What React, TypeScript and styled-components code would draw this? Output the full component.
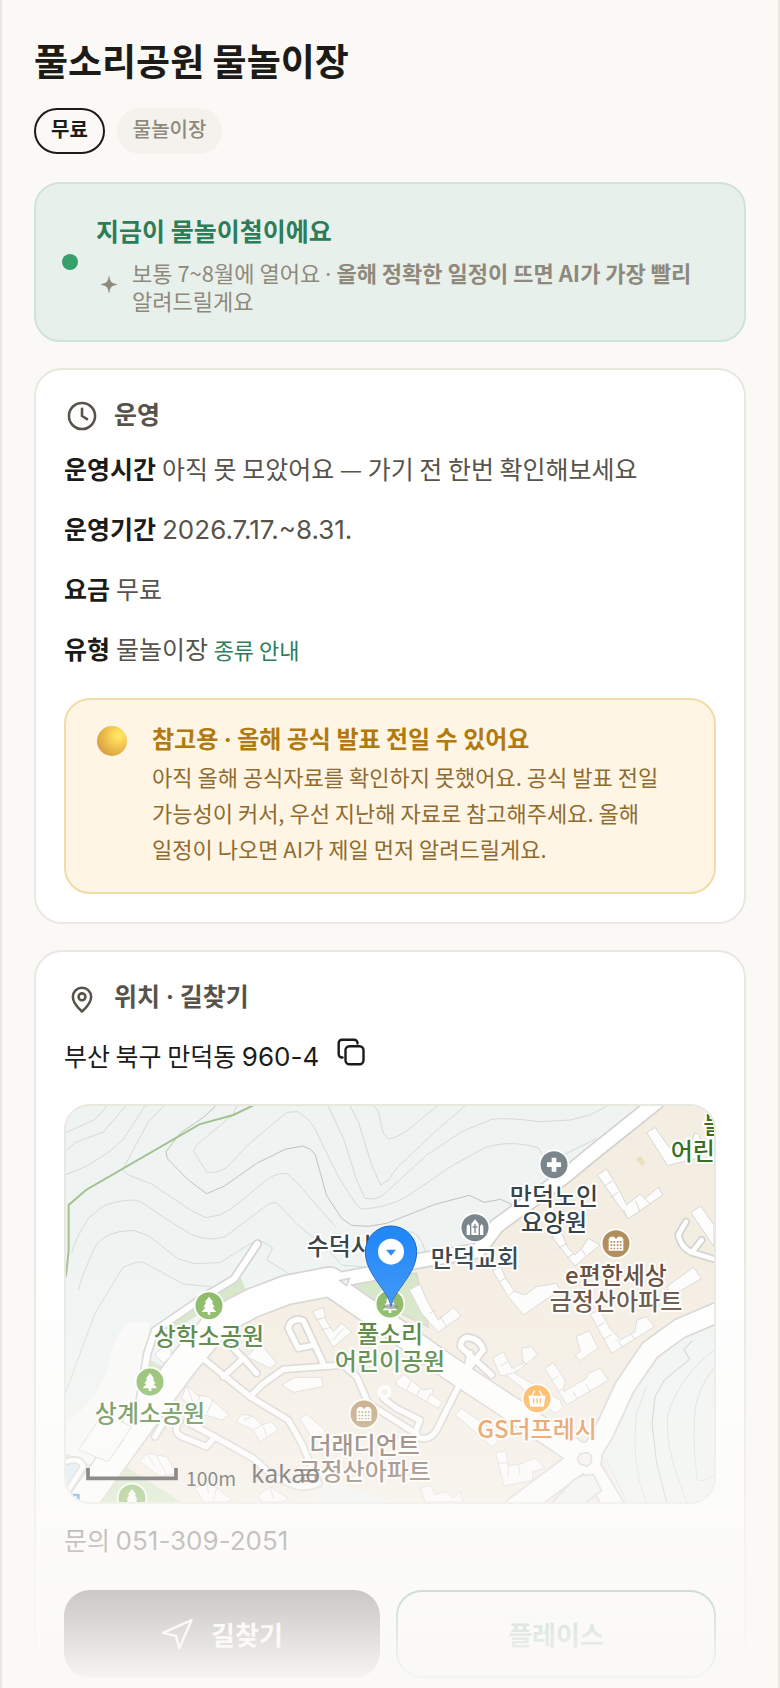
import React from "react";
import styled, { createGlobalStyle, css } from "styled-components";

const GlobalStyle = createGlobalStyle`
  *, *::before, *::after { box-sizing: border-box; }
  body {
    margin: 0;
    background: #faf9f6;
    color: #1c1b18;
    font-family: "Noto Sans CJK KR", Inter, sans-serif;
    font-size: 25px;
    line-height: 40px;
    word-break: keep-all;
  }
  h1, h2, p, dl, dd, dt { margin: 0; }
  button { font: inherit; color: inherit; cursor: pointer; }
`;

const Page = styled.main`
  position: relative;
  height: 100vh;
  overflow: hidden;
  padding: 34px 32px 0;
  border: solid #e9e7e1;
  border-width: 0 2px;
`;

const Title = styled.h1`
  font-size: 37px;
  line-height: 52px;
  font-weight: 700;
`;

const Tags = styled.div`
  display: flex;
  gap: 12px;
  margin-top: 22px;
`;

const Tag = styled.span<{ $outlined?: boolean }>`
  border-radius: 23px;
  font-size: 20px;
  line-height: 26px;
  ${(p) =>
    p.$outlined
      ? css`
          padding: 6px 15px 10px;
          border: 2px solid #1c1b18;
          font-weight: 700;
        `
      : css`
          padding: 8px 16px 12px;
          background: #f3f2ed;
          color: #8f897c;
          font-weight: 500;
        `}
`;

const Season = styled.section`
  display: flex;
  align-items: center;
  gap: 18px;
  margin-top: 28px;
  padding: 26px;
  border: 2px solid #cfe4d8;
  border-radius: 26px;
  background: #e8f0eb;
`;

const Dot = styled.span`
  flex: none;
  width: 16px;
  height: 16px;
  border-radius: 50%;
  background: #36a06b;
`;

const SeasonTitle = styled.h2`
  color: #2d7d58;
  font-size: 25px;
  line-height: 40px;
  font-weight: 700;
`;

const Hint = styled.div`
  display: flex;
  align-items: center;
  gap: 10px;
  margin-top: 8px;
  color: #8f897c;
  font-size: 22px;
  line-height: 28px;

  svg { flex: none; }
`;

const Card = styled.section`
  margin-top: 26px;
  padding: 28px;
  border: 2px solid #e9e7e1;
  border-radius: 28px;
  background: #fff;
`;

const CardHeader = styled.header`
  display: flex;
  align-items: center;
  gap: 14px;
  height: 36px;
  color: #57534a;
`;

const CardTitle = styled.h2`
  padding-bottom: 6px;
  font-size: 25px;
  line-height: 30px;
  font-weight: 700;
`;

const Facts = styled.dl`
  display: grid;
  gap: 20px;
  margin-top: 14px;
`;

const Fact = styled.div`
  display: flex;
  gap: 6px;

  dt { font-weight: 700; }
  dd { color: #57534a; }
`;

const Separator = styled.span`
  font-family: Inter, sans-serif;
  line-height: 1;
`;

const Digits = styled.span`
  font-family: Inter, sans-serif;
  font-size: 26px;
  line-height: 1;
`;

const GuideLink = styled.a`
  color: #2d7d58;
  font-size: 22px;
  line-height: 1;
  text-decoration: none;
`;

const Notice = styled.aside`
  display: flex;
  gap: 22px;
  margin-top: 30px;
  padding: 18px 28px 26px;
  border: 2px solid #f0dca6;
  border-radius: 26px;
  background: #fff5e5;
  color: #8f6b2e;
  font-size: 22px;
  line-height: 36px;
`;

const NoticeTitle = styled.h2`
  color: #b27a0c;
  font-size: 24px;
  line-height: 40px;
  font-weight: 700;
`;

const Orb = styled.span`
  flex: none;
  width: 30px;
  height: 30px;
  margin: 8px 3px;
  border-radius: 50%;
  background: radial-gradient(circle at 72% 32%, #ffe562 8%, #eebf4c 45%, #d8a145 75%, #cf7a60 100%);
`;

const Address = styled.div`
  display: flex;
  align-items: flex-start;
  gap: 12px;
  min-height: 48px;
  margin-top: 16px;
  line-height: 46px;
`;

const CopyButton = styled.button`
  display: grid;
  place-items: center;
  width: 40px;
  height: 40px;
  padding: 0;
  border: 0;
  background: none;
`;

const MapFrame = styled.figure`
  height: 400px;
  margin: 24px 0 0;
  border: 2px solid #e9e7e1;
  border-radius: 26px;
  overflow: hidden;

  svg { display: block; width: 100%; height: 100%; }
`;

const Contact = styled.p`
  margin-top: 15px;
  color: #57534a;
`;

const Actions = styled.div`
  display: flex;
  gap: 16px;
  margin-top: 31px;
`;

const Action = styled.button<{ $primary?: boolean }>`
  display: flex;
  flex: 1;
  align-items: center;
  justify-content: center;
  gap: 18px;
  height: 88px;
  padding: 0;
  border-radius: 26px;
  font-size: 26px;
  font-weight: 700;
  ${(p) =>
    p.$primary
      ? css`
          border: 0;
          background: #1c1b18;
          color: #fff;
        `
      : css`
          border: 2px solid #2d7d58;
          background: #fff;
          color: #2d7d58;
        `}
`;

const Fade = styled.div`
  position: absolute;
  right: -2px;
  bottom: 0;
  left: -2px;
  height: 448px;
  background: linear-gradient(rgba(250, 249, 246, 0), #faf9f6);
  pointer-events: none;
`;

const Sparkle = () => (
  <svg width="26" height="26" viewBox="0 0 26 26" aria-hidden="true">
    <path d="M13 3.500C14 9 15.500 10.500 21 11.500C15.500 12.500 14 14 13 19.500C12 14 10.500 12.500 5 11.500C10.500 10.500 12 9 13 3.500Z" fill="currentColor" stroke="currentColor" strokeWidth=".6" />
  </svg>
);

const iconProps = {
  fill: "none",
  stroke: "currentColor",
  strokeLinecap: "round",
  strokeLinejoin: "round",
  "aria-hidden": true,
} as const;

const ClockIcon = () => (
  <svg width="36" height="36" viewBox="0 0 24 24" strokeWidth="1.7" {...iconProps}>
    <circle cx="12" cy="12" r="8.700" />
    <path d="M12 7.200V12l3.400 2.100" />
  </svg>
);

const PlaceIcon = () => (
  <svg width="36" height="36" viewBox="0 0 24 24" strokeWidth="1.7" {...iconProps}>
    <path d="M12 21C15.800 17.700 18.100 14.500 18.100 11.200a6.100 6.100 0 0 0-12.200 0C5.900 14.500 8.200 17.700 12 21z" />
    <circle cx="12" cy="11.200" r="2.300" />
  </svg>
);

const CopyIcon = () => (
  <svg width="28" height="28" viewBox="0 0 28 28" strokeWidth="2.4" {...iconProps}>
    <rect x="8.500" y="8.200" width="18" height="18" rx="4" />
    <path d="M5.500 19.500H5a3.300 3.300 0 0 1-3.300-3.300V5A3.300 3.300 0 0 1 5 1.700h12A3.300 3.300 0 0 1 20.500 5v.5" />
  </svg>
);

const NavIcon = () => (
  <svg width="32" height="32" viewBox="0 0 32 32" strokeWidth="2.4" {...iconProps}>
    <path d="M2 14.800L30.500 2.200 18.200 30.200 15 18z" />
  </svg>
);

type Tone = { fill: string };
const slate: Tone = { fill: "#36434a" };
const leaf: Tone = { fill: "#37701f" };
const bark: Tone = { fill: "#5c4433" };
const amber: Tone = { fill: "#e2751a" };

const MapText = styled.text`
  font-family: "Noto Sans CJK KR", sans-serif;
  font-size: 72px;
  font-weight: 500;
  paint-order: stroke;
  stroke: #fff;
  stroke-width: 12px;
  stroke-linejoin: round;
`;

const Label = ({ x, y, tone, anchor = "middle", lines }: { x: number; y: number; tone: Tone; anchor?: "start" | "middle"; lines: string[] }) => (
  <MapText textAnchor={anchor} fill={tone.fill}>
    {lines.map((line, i) => (
      <tspan key={line} x={x} y={y + i * 79}>
        {line}
      </tspan>
    ))}
  </MapText>
);

const Badge = ({ x, y, color, children }: { x: number; y: number; color: string; children: React.ReactNode }) => (
  <g transform={`translate(${x} ${y})`}>
    <circle r="43" fill={color} stroke="#fff" strokeWidth="5" />
    <g fill="#fff">{children}</g>
  </g>
);

const Tree = () => <path d="M0-27L13-10H8L17 5H10L22 19H4V27H-4V19H-22L-10 5H-17L-8-10H-13Z" />;

const Apartment = ({ color }: { color: string }) => (
  <>
    <path d="M-22-14L-16-21H-6L0-14L6-21H16L22-14V21H-22Z" />
    <path d="M-14-8v24M-5-8v24M5-8v24M14-8v24" stroke={color} strokeWidth="5" strokeDasharray="5 5" />
  </>
);

const contours = [
  "M78 158L165 118L201 78",
  "M78 212L105 188L190 156L257 78",
  "M78 284L143 257L205 217L250 178L315 78",
  "M372 78L325 125L285 200L247 270L265 285L335 312L455 392L498 413L540 405L575 385L685 296Q712 278 742 281L780 318L888 442",
  "M95 520Q105 478 145 415L188 379Q265 350 302 365L375 415L455 464Q505 486 555 470L680 376Q695 366 710 368L768 430L865 510L905 555L980 562",
  "M115 630Q128 580 168 495Q200 452 280 451L325 467L415 537L465 551L540 548L620 498L655 478L698 503L680 540L750 583",
  "M78 935L165 700L248 563Q290 542 310 547L430 612L520 621",
  "M590 78L578 105L470 195L460 212L500 276Q535 282 565 258L620 198L740 97L772 95Q800 108 823 143L895 290L950 375L965 387Q1040 384 1100 350L1240 255L1335 203Q1395 183 1460 195L1495 203L1510 230",
  "M865 78L912 180L950 300L975 355Q1005 362 1030 345L1160 225L1265 155L1355 118Q1400 112 1500 125L1590 120L1650 105L1702 78",
  "M930 78L955 125L995 255L1022 315L1045 300L1072 262L1200 142L1275 78",
  "M1003 78L1015 95L1030 160L1045 177Q1085 170 1125 132L1192 78",
  "M1510 255L1670 175",
  "M1100 455Q1140 450 1158 520",
];

const majorContours = [
  "M527 78L490 112L420 160L378 215L382 236L445 300L500 341L553 318L650 250L735 208L788 198L812 208L826 225L860 347L905 415L935 436L985 439L1040 430L1185 373L1288 346L1332 367L1382 358L1430 380",
  "M1957 782L1932 808L1949 838L1873 900L1845 950L1836 1030L1850 1150L1880 1266",
];

const lowerContours = [
  "M2022 810Q1910 900 1882 1010Q1880 1100 1910 1180L1940 1266",
  "M2022 865Q1965 930 1963 1020Q1960 1120 1972 1200L1990 1202L2022 1185",
  "M1820 918L1790 1000Q1770 1140 1818 1266",
  "M1700 1140L1760 1266",
];

const roads: { d: string; w: number }[] = [
  { d: "M652 492L582 597L500 646L345 752L322 820L300 960L188 1145", w: 18 },
  { d: "M1850 66L1660 218L1580 284L1370 438L1315 512L1120 545L1000 580L860 606", w: 40 },
  { d: "M870 605L740 630L640 668L540 720L430 850L330 985L110 1290", w: 84 },
  { d: "M850 600L1050 738L1220 858L1420 990L1630 1132", w: 68 },
  { d: "M2050 690L1920 745L1830 810L1755 920L1690 1060L1640 1140L1730 1290", w: 56 },
  { d: "M1650 1120L1430 1285", w: 68 },
  { d: "M1625 1132L1640 1132", w: 88 },
  { d: "M470 820L630 950L745 1020L785 1090L835 1210Q790 1230 750 1210L700 1190L640 1135L560 1090L440 1025", w: 16 },
  { d: "M550 890L610 835L650 880M610 835L575 800", w: 16 },
  { d: "M630 950L665 915L730 868L910 855L950 890L985 970L1130 1062", w: 16 },
  { d: "M850 850L790 722Q770 712 750 730L745 745L775 805L822 795", w: 16 },
  { d: "M345 1070L375 1020L412 1035Q400 1060 430 1072L500 1100L525 1070", w: 16 },
  { d: "M1030 955L1070 985L1140 1020L1125 1060M1255 920L1190 1050Q1170 1085 1130 1072", w: 16 },
  { d: "M1290 860L1330 810Q1320 775 1280 772Q1260 780 1262 800L1355 885M1290 820L1280 870", w: 16 },
  { d: "M1938 425L1915 465Q1925 510 1965 520L2030 540M1955 518L1985 480", w: 14 },
  { d: "M78 1145Q120 1130 130 1160L78 1240", w: 14 },
];

const buildings = [
  "M1820 158L1845 142L1882 195L1910 225L1950 200L1965 158L1980 165L1970 235L1883 257Z",
  "M1672 285L1700 267L1740 335L1760 375L1778 360L1800 342L1814 356L1855 322L1868 345L1764 417L1735 375Z",
  "M1952 397L1982 378L2022 435V500Z",
  "M1535 470L1565 460L1585 505L1605 525L1625 505L1645 475L1680 495L1605 558Z",
  "M1358 573L1382 560L1400 600L1425 635L1455 645L1490 620L1550 610L1560 630L1450 705L1405 650Z",
  "M1108 630L1140 612L1160 660L1195 720L1240 682L1263 708L1195 757L1145 700Z",
  "M1650 702L1680 690L1710 745L1742 780L1785 755L1790 720L1820 710L1843 740L1715 820Z",
  "M1608 770L1648 752L1675 805L1620 842L1605 825L1622 815Z",
  "M1880 620L1960 562L1985 595L1900 645Z",
  "M1358 835L1390 815L1415 865L1450 850L1445 805L1475 800L1492 825L1410 890L1380 885Z",
  "M1398 885L1420 878L1560 960L1570 985L1545 1000Z",
  "M1515 865L1540 848L1575 900L1570 935L1640 895L1645 880L1680 865L1705 900L1580 975Z",
  "M1068 905L1090 882L1150 930L1180 925L1175 945L1207 965L1195 985L1070 915Z",
  "M1246 1005L1265 985L1385 1070L1358 1102Z",
  "M1367 1118L1397 1112L1405 1158L1450 1150L1455 1145L1485 1135L1515 1165L1478 1175V1200L1392 1218Z",
  "M1142 1225L1172 1215L1185 1245L1210 1235L1225 1240L1240 1255L1260 1235L1270 1266H1155Z",
  "M818 695L850 682L858 720L880 755L905 730L935 755L880 802Z",
  "M424 955L440 915L470 945L505 950L568 1005L545 1020L480 1000Z",
  "M588 1025L605 1003L640 1008L665 1035L695 1025L715 1050L660 1085L640 1050Z",
  "M725 915L765 892L845 892L850 920L760 937Z",
  "M300 1145L320 1120L380 1130L410 1180L360 1190Z",
  "M465 1225L500 1200L578 1260L560 1266H490Z",
  "M655 1245L690 1220L745 1255L730 1266H665Z",
  "M115 1110L190 1000L275 1040L205 1145Z",
  "M780 1015L800 1003L855 1050L850 1075L810 1065Z",
  "M620 830L660 790L710 850L690 865Z",
  "M345 825L365 800L395 810L392 830L370 850Z",
];

const buildingSeams =
  "M1692 318L1716 304M1712 352L1736 336M1764 417L1750 388M1800 395L1786 362M1832 372L1814 356M1555 505L1578 492M1580 535L1600 522M1640 530L1624 508M1378 605L1400 592M1408 645L1424 632M1168 700L1188 690M1218 738L1200 708M1672 740L1694 728M1692 778L1715 762M1745 800L1732 778M1785 778L1770 760M1380 858L1402 846M1432 876L1418 862M1460 855L1446 838M1535 900L1556 888M1555 935L1574 922M1612 958L1600 935M1650 935L1638 912M1100 930L1112 905M1130 948L1142 925M1160 965L1172 940M1370 1150L1400 1148M1405 1190L1404 1158M1440 1185L1436 1152M828 720L856 712M845 750L872 742M880 780L910 745M440 915L460 970M480 945L470 980M520 960L500 1000M610 1020L640 1008M640 1050L665 1035M680 1070L670 1040M320 1120L345 1160M350 1128L380 1185M500 1200L505 1240M530 1225L520 1260M690 1220L700 1255";

const NeighborhoodMap = () => (
  <svg viewBox="78 78 1944 1188" preserveAspectRatio="xMidYMid slice" role="img" aria-label="풀소리공원 주변 지도">
    <rect x="78" y="78" width="1944" height="1188" fill="#f4ede2" />
    <path d="M0 0H1930L1580 284L1370 438L1300 530L860 600L600 680L450 800L300 980L60 1330H0Z" fill="#eff4f2" />
    <path d="M275 728H330L300 1000L100 1300H60V1035Q165 980 205 860Q225 745 275 728Z" fill="#f9faf9" />
    <path d="M78 1120L165 1160L90 1266H60Z" fill="#d9e9f4" />
    <path d="M2040 730L1900 790L1800 905L1690 1130L1760 1290H2040Z" fill="#eff4f2" />
    <path d="M860 1200L1060 1266H820Z" fill="#eff4f2" />
    <path d="M520 640L602 592L620 635L480 700L390 760L370 735Z" fill="#d3e5c4" />
    <path d="M330 840L378 865L300 975Z" fill="#d3e5c4" />
    <path d="M950 590L1130 580L1165 740L1060 690L938 628Z" fill="#d3e5c4" stroke="#d4d4d0" strokeWidth="5" />
    <path d="M240 1150L430 1270H150Z" fill="#cde3bb" />

    <g fill="none" stroke="#d3dad6" strokeWidth="3">
      {contours.map((d) => <path key={d} d={d} />)}
      {lowerContours.map((d) => <path key={d} d={d} />)}
    </g>
    <g fill="none" stroke="#bcc4b8" strokeWidth="3">
      {majorContours.map((d) => <path key={d} d={d} />)}
    </g>
    <path d="M640 76L580 105L478 133L138 330L86 375V510L78 590" fill="none" stroke="#a3c18f" strokeWidth="6" />

    <g fill="none" stroke="#d3d2d1" strokeLinejoin="round" strokeLinecap="round">
      {roads.map((r) => <path key={r.d} d={r.d} strokeWidth={r.w + 10} />)}
    </g>
    <g fill="none" stroke="#fff" strokeLinejoin="round" strokeLinecap="round">
      {roads.map((r) => <path key={r.d} d={r.d} strokeWidth={r.w} />)}
    </g>
    <path d="M1600 1200L1628 1186L1660 1183L1685 1232L1625 1275H1530Z" fill="#eff4f2" stroke="#d3d2d1" strokeWidth="5" />
    <path d="M900 602L928 595L920 616Z" fill="#f4f4f2" stroke="#d3d2d1" strokeWidth="5" />
    <path d="M195 1140L255 1060L250 1080L205 1140Z" fill="#ecebe9" stroke="#d3d2d1" strokeWidth="4" />
    <path d="M1620 1122L1640 1117L1654 1126V1148L1642 1158L1620 1152L1612 1138Z" fill="#f4f2ee" stroke="#d3d2d1" strokeWidth="5" />
    <circle cx="1033" cy="936" r="15" fill="#f4ede2" stroke="#fff" strokeWidth="12" />

    <g fill="#fdfdfd" stroke="#d9d7d4" strokeWidth="3">
      {buildings.map((d) => <path key={d} d={d} />)}
      <path d={buildingSeams} fill="none" />
    </g>
    <path d="M1788 236L1802 227L1817 249L1805 258Z" fill="#eadfbf" />

    <Badge x={1542} y={254} color="#7b868c">
      <path d="M-7-21H7V-7H21V7H7V21H-7V7H-21V-7H-7Z" />
    </Badge>
    <Badge x={1305} y={443} color="#7b868c">
      <path d="M-25 22V-4L-20-11L-15-4V22ZM15 22V-4L20-11L25-4V22ZM-11 22V-12L0-25L11-12V22Z" />
      <path d="M0-12V16M-7-2H7" stroke="#7b868c" strokeWidth="4" />
    </Badge>
    <Badge x={1728} y={491} color="#b28d5c"><Apartment color="#b28d5c" /></Badge>
    <Badge x={507} y={677} color="#80b458"><Tree /></Badge>
    <Badge x={1050} y={672} color="#80b458"><Tree /></Badge>
    <Badge x={330} y={906} color="#78b04e"><Tree /></Badge>
    <Badge x={276} y={1254} color="#78b04e"><Tree /></Badge>
    <Badge x={972} y={1002} color="#b28d5c"><Apartment color="#b28d5c" /></Badge>
    <Badge x={1491} y={956} color="#ffa52e">
      <path d="M-26-9H26L20 24H-20Z" />
      <path d="M-16-8L-7-24M16-8L7-24" stroke="#fff" strokeWidth="4" />
      <path d="M-10-1V14M0-1V14M10-1V14" stroke="#ffa52e" strokeWidth="4" />
    </Badge>

    <Label x={800} y={525} tone={slate} anchor="start" lines={["수덕사"]} />
    <Label x={1542} y={374} tone={slate} lines={["만덕노인", "요양원"]} />
    <Label x={1305} y={562} tone={slate} lines={["만덕교회"]} />
    <Label x={1728} y={612} tone={bark} lines={["e편한세상", "금정산아파트"]} />
    <Label x={1990} y={161} tone={leaf} anchor="start" lines={["늘"]} />
    <Label x={1892} y={239} tone={leaf} anchor="start" lines={["어린"]} />
    <Label x={507} y={796} tone={leaf} lines={["상학소공원"]} />
    <Label x={330} y={1025} tone={leaf} lines={["상계소공원"]} />
    <Label x={1050} y={790} tone={leaf} lines={["풀소리", "어린이공원"]} />
    <Label x={974} y={1121} tone={bark} lines={["더래디언트", "금정산아파트"]} />
    <Label x={1491} y={1074} tone={amber} lines={["GS더프레시"]} />

    <ellipse cx="1053" cy="680" rx="22" ry="8" fill="#6f7a70" opacity=".6" />
    <path d="M1053 680C1045 630 976 585 976 515A77 77 0 0 1 1130 515C1130 585 1061 630 1053 680Z" fill="#2489f8" stroke="#1b63c4" strokeWidth="3" />
    <circle cx="1053" cy="515" r="39" fill="#fff" />
    <path d="M1038 509H1068L1053 527Z" fill="#2489f8" />

    <path d="M96 1245H115V1266" fill="none" stroke="#3d8fd0" strokeWidth="8" />
    <path d="M144 1164V1195H408V1164" fill="none" stroke="#111" strokeWidth="11" />
    <text x="438" y="1218" fill="#111" fontFamily="'Noto Sans CJK KR', sans-serif" fontSize="58" fontWeight="400">100m</text>
    <text x="634" y="1210" fill="#111" fontFamily="'Noto Sans', sans-serif" fontSize="74" fontWeight="400">kakao</text>
  </svg>
);

export default function App() {
  return (
    <>
      <GlobalStyle />
      <Page>
        <Title>풀소리공원 물놀이장</Title>
        <Tags>
          <Tag $outlined>무료</Tag>
          <Tag>물놀이장</Tag>
        </Tags>

        <Season>
          <Dot />
          <div>
            <SeasonTitle>지금이 물놀이철이에요</SeasonTitle>
            <Hint>
              <Sparkle />
              <p>
                보통 7~8월에 열어요 <Separator>·</Separator>{" "}
                <strong>올해 정확한 일정이 뜨면 AI가 가장 빨리</strong> 알려드릴게요
              </p>
            </Hint>
          </div>
        </Season>

        <Card>
          <CardHeader>
            <ClockIcon />
            <CardTitle>운영</CardTitle>
          </CardHeader>
          <Facts>
            <Fact>
              <dt>운영시간</dt>
              <dd>아직 못 모았어요 — 가기 전 한번 확인해보세요</dd>
            </Fact>
            <Fact>
              <dt>운영기간</dt>
              <dd>
                <Digits>2026.7.17.~8.31.</Digits>
              </dd>
            </Fact>
            <Fact>
              <dt>요금</dt>
              <dd>무료</dd>
            </Fact>
            <Fact>
              <dt>유형</dt>
              <dd>
                물놀이장 <GuideLink href="#types">종류 안내</GuideLink>
              </dd>
            </Fact>
          </Facts>
          <Notice>
            <Orb />
            <div>
              <NoticeTitle>
                참고용 <Separator>·</Separator> 올해 공식 발표 전일 수 있어요
              </NoticeTitle>
              <p>
                아직 올해 공식자료를 확인하지 못했어요. 공식 발표 전일 가능성이 커서, 우선 지난해 자료로
                참고해주세요. 올해 일정이 나오면 AI가 제일 먼저 알려드릴게요.
              </p>
            </div>
          </Notice>
        </Card>

        <Card>
          <CardHeader>
            <PlaceIcon />
            <CardTitle>
              위치 <Separator>·</Separator> 길찾기
            </CardTitle>
          </CardHeader>
          <Address>
            <span>
              부산 북구 만덕동 <Digits>960-4</Digits>
            </span>
            <CopyButton type="button" aria-label="주소 복사">
              <CopyIcon />
            </CopyButton>
          </Address>
          <MapFrame>
            <NeighborhoodMap />
          </MapFrame>
          <Contact>
            문의 <Digits>051-309-2051</Digits>
          </Contact>
          <Actions>
            <Action type="button" $primary>
              <NavIcon />
              길찾기
            </Action>
            <Action type="button">플레이스</Action>
          </Actions>
        </Card>
        <Fade />
      </Page>
    </>
  );
}
